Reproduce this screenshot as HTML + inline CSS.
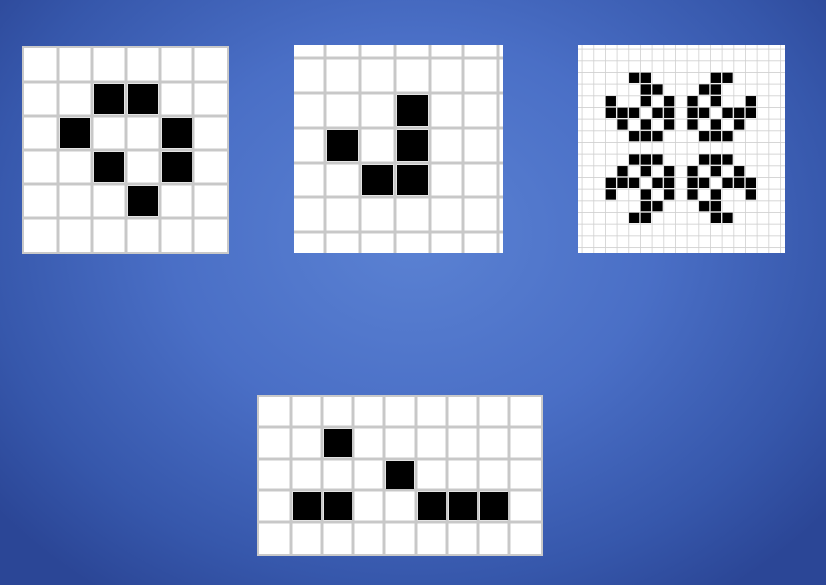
<!DOCTYPE html>
<html><head><meta charset="utf-8"><style>
html,body{margin:0;padding:0;width:826px;height:585px;overflow:hidden}
body{background:radial-gradient(ellipse 65% 75% at 50% 40%,#5b82d3 0%,#4a6fc6 45%,#3657ab 80%,#2b4696 100%)}
svg{position:absolute;left:0;top:0}
</style></head><body>
<svg width="826" height="585" viewBox="0 0 826 585">
<defs>
<g id="q">
<rect x="2.06" y="0.06" width="0.88" height="0.88"/><rect x="3.06" y="0.06" width="0.88" height="0.88"/>
<rect x="3.06" y="1.06" width="0.88" height="0.88"/><rect x="4.06" y="1.06" width="0.88" height="0.88"/>
<rect x="0.06" y="2.06" width="0.88" height="0.88"/><rect x="3.06" y="2.06" width="0.88" height="0.88"/><rect x="5.06" y="2.06" width="0.88" height="0.88"/>
<rect x="0.06" y="3.06" width="0.88" height="0.88"/><rect x="1.06" y="3.06" width="0.88" height="0.88"/><rect x="2.06" y="3.06" width="0.88" height="0.88"/><rect x="4.06" y="3.06" width="0.88" height="0.88"/><rect x="5.06" y="3.06" width="0.88" height="0.88"/>
<rect x="1.06" y="4.06" width="0.88" height="0.88"/><rect x="3.06" y="4.06" width="0.88" height="0.88"/><rect x="5.06" y="4.06" width="0.88" height="0.88"/>
<rect x="2.06" y="5.06" width="0.88" height="0.88"/><rect x="3.06" y="5.06" width="0.88" height="0.88"/><rect x="4.06" y="5.06" width="0.88" height="0.88"/>
</g>
<pattern id="p3" patternUnits="userSpaceOnUse" x="605" y="72" width="11.67" height="11.67">
<rect width="11.67" height="11.67" fill="#fff"/>
<path d="M0 0H11.67M0 0V11.67" stroke="#d0d0d0" stroke-width="1.6" fill="none"/>
</pattern>
</defs>

<g>
<rect x="23" y="47" width="205" height="206" fill="#fff" stroke="#c9c9c9" stroke-width="2"/>
<g stroke="#c8c8c8" stroke-width="3">
<path d="M58 47V253M92 47V253M126 47V253M160 47V253M193 47V253"/>
<path d="M23 82H228M23 116H228M23 150H228M23 184H228M23 218H228"/>
</g>
<g fill="#000">
<rect x="94" y="84" width="30" height="30"/><rect x="128" y="84" width="30" height="30"/>
<rect x="60" y="118" width="30" height="30"/><rect x="162" y="118" width="30" height="30"/>
<rect x="94" y="152" width="30" height="30"/><rect x="162" y="152" width="30" height="30"/>
<rect x="128" y="186" width="30" height="30"/>
</g>
</g>

<g>
<rect x="294" y="45" width="209" height="208" fill="#fff"/>
<g stroke="#c8c8c8" stroke-width="3">
<path d="M325 45V253M360 45V253M395 45V253M430 45V253M463 45V253M498 45V253"/>
<path d="M294 58H503M294 93H503M294 128H503M294 163H503M294 197H503M294 232H503"/>
</g>
<g fill="#000">
<rect x="397" y="95" width="31" height="31"/>
<rect x="327" y="130" width="31" height="31"/><rect x="397" y="130" width="31" height="31"/>
<rect x="362" y="165" width="31" height="30"/><rect x="397" y="165" width="31" height="30"/>
</g>
</g>

<g>
<rect x="578" y="45" width="207" height="208" fill="url(#p3)"/>
<g fill="#000" transform="translate(605,72) scale(11.67)">
<use href="#q"/>
<use href="#q" transform="translate(13,0) scale(-1,1)"/>
<use href="#q" transform="translate(0,13) scale(1,-1)"/>
<use href="#q" transform="translate(13,13) scale(-1,-1)"/>
</g>
</g>

<g>
<rect x="258" y="396" width="284" height="159" fill="#fff" stroke="#c9c9c9" stroke-width="2"/>
<g stroke="#c8c8c8" stroke-width="3">
<path d="M291 396V555M322 396V555M353 396V555M384 396V555M416 396V555M447 396V555M478 396V555M509 396V555"/>
<path d="M258 427H542M258 459H542M258 490H542M258 522H542"/>
</g>
<g fill="#000">
<rect x="324" y="429" width="28" height="28"/>
<rect x="386" y="461" width="28" height="28"/>
<rect x="293" y="492" width="28" height="28"/><rect x="324" y="492" width="28" height="28"/>
<rect x="418" y="492" width="28" height="28"/><rect x="449" y="492" width="28" height="28"/><rect x="480" y="492" width="28" height="28"/>
</g>
</g>
</svg>
</body></html>
